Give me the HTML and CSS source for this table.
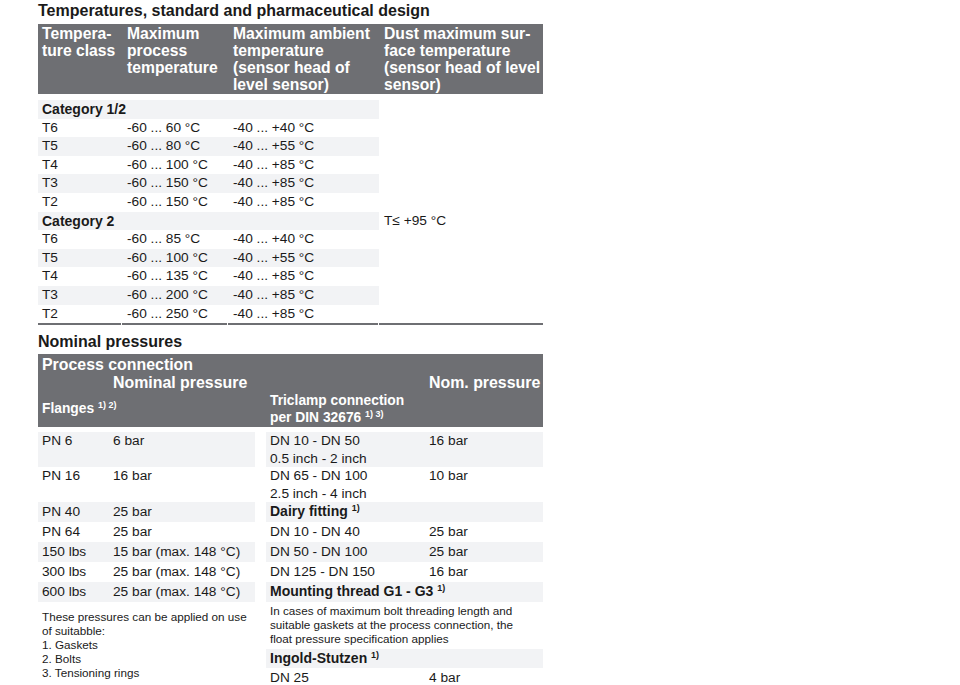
FILE: index.html
```html
<!DOCTYPE html>
<html lang="en">
<head>
<meta charset="utf-8">
<title>Temperatures and nominal pressures</title>
<link rel="stylesheet" href="styles.css">
</head>
<body>
<div class="page">
  <h2 class="title title-top">Temperatures, standard and pharmaceutical design</h2>
  <table class="temp">
    <colgroup><col class="w1"><col class="w2"><col class="w3"><col class="w4"></colgroup>
    <thead>
      <tr>
        <th class="first">Tempera-<br>ture class</th>
        <th>Maximum<br>process<br>temperature</th>
        <th>Maximum ambient<br>temperature<br>(sensor head of<br>level sensor)</th>
        <th>Dust maximum sur-<br>face temperature<br>(sensor head of level<br>sensor)</th>
      </tr>
    </thead>
    <tbody>
      <tr class="gap"><td colspan="4"></td></tr>
      <tr class="alt"><td class="first cat" colspan="3">Category 1/2</td><td class="dust"></td></tr>
      <tr><td class="first">T6</td><td>-60 ... 60 °C</td><td>-40 ... +40 °C</td><td class="dust"></td></tr>
      <tr class="alt"><td class="first">T5</td><td>-60 ... 80 °C</td><td>-40 ... +55 °C</td><td class="dust"></td></tr>
      <tr><td class="first">T4</td><td>-60 ... 100 °C</td><td>-40 ... +85 °C</td><td class="dust"></td></tr>
      <tr class="alt"><td class="first">T3</td><td>-60 ... 150 °C</td><td>-40 ... +85 °C</td><td class="dust"></td></tr>
      <tr><td class="first">T2</td><td>-60 ... 150 °C</td><td>-40 ... +85 °C</td><td class="dust"></td></tr>
      <tr class="alt"><td class="first cat" colspan="3">Category 2</td><td class="dust">T≤ +95 °C</td></tr>
      <tr><td class="first">T6</td><td>-60 ... 85 °C</td><td>-40 ... +40 °C</td><td class="dust"></td></tr>
      <tr class="alt"><td class="first">T5</td><td>-60 ... 100 °C</td><td>-40 ... +55 °C</td><td class="dust"></td></tr>
      <tr><td class="first">T4</td><td>-60 ... 135 °C</td><td>-40 ... +85 °C</td><td class="dust"></td></tr>
      <tr class="alt"><td class="first">T3</td><td>-60 ... 200 °C</td><td>-40 ... +85 °C</td><td class="dust"></td></tr>
      <tr><td class="first">T2</td><td>-60 ... 250 °C</td><td>-40 ... +85 °C</td><td class="dust"></td></tr>
    </tbody>
    <tfoot>
      <tr class="rule"><td><div class="line"></div></td><td><div class="line"></div></td><td><div class="line"></div></td><td class="last"><div class="line"></div></td></tr>
    </tfoot>
  </table>

  <h2 class="title title-press">Nominal pressures</h2>
  <table class="press">
    <colgroup><col class="p1"><col class="p2"><col class="p3"><col class="p4"><col class="p5"></colgroup>
    <thead>
      <tr class="h1"><th colspan="5">Process connection</th></tr>
      <tr class="h2"><th></th><th class="c2">Nominal pressure</th><th></th><th></th><th>Nom. pressure</th></tr>
      <tr class="h3"><th colspan="2" class="mid">Flanges <sup>1) 2)</sup></th><th></th><th colspan="2" class="tri">Triclamp connection<br>per DIN 32676 <sup>1) 3)</sup></th></tr>
    </thead>
    <tbody>
      <tr class="gap"><td colspan="5"></td></tr>
      <tr class="alt two"><td class="bg">PN 6</td><td class="bg c2">6 bar</td><td class="sp"></td><td class="bg">DN 10 - DN 50<br>0.5 inch - 2 inch</td><td class="bg">16 bar</td></tr>
      <tr class="two"><td>PN 16</td><td class="c2">16 bar</td><td class="sp"></td><td>DN 65 - DN 100<br>2.5 inch - 4 inch</td><td>10 bar</td></tr>
      <tr class="alt"><td class="bg">PN 40</td><td class="bg c2">25 bar</td><td class="sp"></td><td class="bg sub" colspan="2">Dairy fitting <sup>1)</sup></td></tr>
      <tr><td>PN 64</td><td class="c2">25 bar</td><td class="sp"></td><td>DN 10 - DN 40</td><td>25 bar</td></tr>
      <tr class="alt"><td class="bg">150 lbs</td><td class="bg c2">15 bar (max. 148 °C)</td><td class="sp"></td><td class="bg">DN 50 - DN 100</td><td class="bg">25 bar</td></tr>
      <tr><td>300 lbs</td><td class="c2">25 bar (max. 148 °C)</td><td class="sp"></td><td>DN 125 - DN 150</td><td>16 bar</td></tr>
      <tr class="alt"><td class="bg">600 lbs</td><td class="bg c2">25 bar (max. 148 °C)</td><td class="sp"></td><td class="bg sub" colspan="2">Mounting thread G1 - G3 <sup>1)</sup></td></tr>
      <tr class="noterow">
        <td class="note left" colspan="2" rowspan="3">These pressures can be applied on use<br>of suitabble:<br>1. Gaskets<br>2. Bolts<br>3. Tensioning rings</td>
        <td class="sp"></td>
        <td class="note right" colspan="2">In cases of maximum bolt threading length and<br>suitable gaskets at the process connection, the<br>float pressure specification applies</td>
      </tr>
      <tr class="alt"><td class="sp"></td><td class="bg sub" colspan="2">Ingold-Stutzen <sup>1)</sup></td></tr>
      <tr><td class="sp"></td><td>DN 25</td><td>4 bar</td></tr>
    </tbody>
  </table>
</div>
</body>
</html>
```

FILE: styles.css
```css
* {
  box-sizing: border-box;
}

html,
body {
  margin: 0;
  padding: 0;
  background: #ffffff;
}

body {
  font-family: "Liberation Sans", Arial, Helvetica, sans-serif;
  color: #1a1a1a;
}

.page {
  padding-left: 38px;
  width: 543px;
}

.title {
  margin: 0;
  font-size: 16px;
  font-weight: bold;
  line-height: 20px;
  color: #1a1a1a;
}

.title-top {
  padding-top: 1px;
  margin-bottom: 3px;
}

.title-press {
  margin-top: 7px;
  margin-bottom: 2px;
}

table {
  border-collapse: collapse;
  border-spacing: 0;
  table-layout: fixed;
  width: 505px;
}

th,
td {
  padding: 0 0 0 5px;
  text-align: left;
  white-space: nowrap;
  font-weight: normal;
}

sup {
  font-size: 9px;
  line-height: 0;
  vertical-align: 5px;
  font-weight: bold;
}

/* ---------- Temperature table ---------- */

.w1 { width: 84px; }
.w2 { width: 106px; }
.w3 { width: 151px; }
.w4 { width: 164px; }

.temp th {
  background: #6e6f73;
  color: #ffffff;
  font-weight: bold;
  font-size: 15.7px;
  line-height: 17px;
  vertical-align: top;
  padding-top: 1px;
  padding-bottom: 1px;
}

.temp .first {
  padding-left: 4px;
}

.temp tbody td {
  font-size: 13.7px;
  line-height: 18.6px;
  height: 18.6px;
}

.temp .cat {
  font-weight: bold;
  font-size: 14px;
}

.temp tr.alt td:not(.dust) {
  background: #f2f3f5;
}

.temp tr.gap td,
.press tr.gap td {
  height: 6px;
  line-height: 0;
  padding: 0;
}

.temp tfoot td {
  padding: 0 1px 0 0;
}

.temp tfoot td.last {
  padding-right: 0;
}

.line {
  height: 2px;
  background: #6e6f73;
}

/* ---------- Pressure table ---------- */

.p1 { width: 70px; }
.p2 { width: 147px; }
.p3 { width: 11px; }
.p4 { width: 159px; }
.p5 { width: 118px; }

.press th {
  background: #6e6f73;
  color: #ffffff;
  font-weight: bold;
  font-size: 15.9px;
  line-height: 18px;
  padding-left: 4px;
  vertical-align: top;
}

.press th.c2 {
  padding-left: 5px;
}

.press .h1 th {
  padding-top: 2px;
}

.press .h3 th {
  padding-bottom: 1px;
}

.press th.mid {
  vertical-align: middle;
  font-size: 13.8px;
}

.press th.tri {
  font-size: 13.8px;
  line-height: 17px;
}

.press tr.gap td {
  height: 5px;
}

.press tbody td {
  font-size: 13.7px;
  line-height: 20px;
  padding-left: 4px;
  vertical-align: top;
}

.press tbody td.c2 {
  padding-left: 5px;
}

.press tbody td.sp {
  padding: 0;
}

.press tr.two td {
  line-height: 17.5px;
}

.press td.bg {
  background: #f2f3f5;
}

.press td.sub {
  font-weight: bold;
  font-size: 14px;
  line-height: 19px;
}

.press td.note {
  font-size: 11.7px;
  line-height: 14px;
}

.press td.note.left {
  padding-top: 8px;
}

.press td.note.right {
  padding-top: 2px;
  padding-bottom: 3px;
}
```
